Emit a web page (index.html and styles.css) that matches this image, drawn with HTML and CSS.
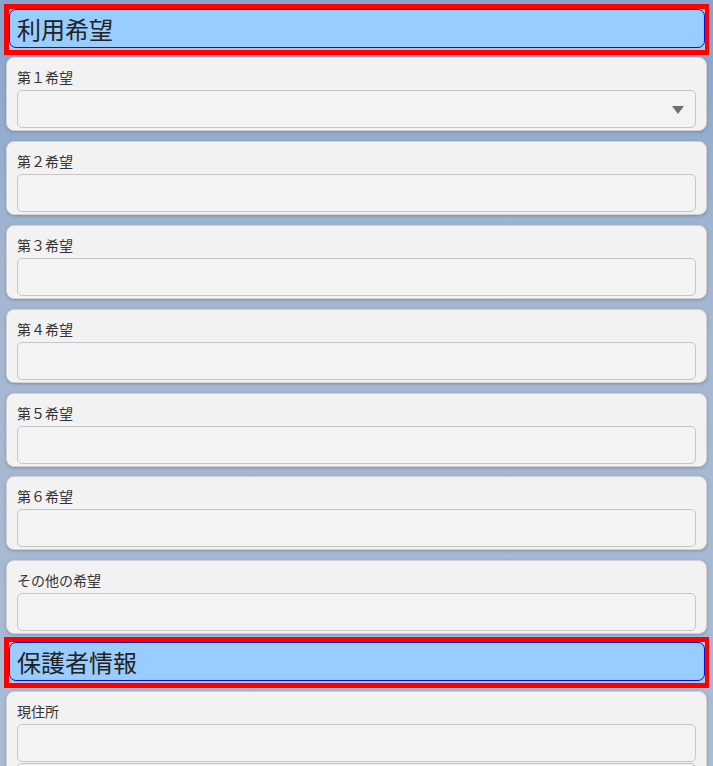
FILE: index.html
```html
<!DOCTYPE html>
<html lang="ja">
<head>
  <meta charset="UTF-8">
  <title>利用希望</title>
  <link rel="stylesheet" href="styles.css">
</head>
<body>
  <div class="page">
    <div class="section-title">
      <h2>利用希望</h2>
    </div>

    <div class="field">
      <label>第１希望</label>
      <div class="select-box"><span class="arrow"></span></div>
    </div>
    <div class="field">
      <label>第２希望</label>
      <input type="text">
    </div>
    <div class="field">
      <label>第３希望</label>
      <input type="text">
    </div>
    <div class="field">
      <label>第４希望</label>
      <input type="text">
    </div>
    <div class="field">
      <label>第５希望</label>
      <input type="text">
    </div>
    <div class="field">
      <label>第６希望</label>
      <input type="text">
    </div>
    <div class="field last">
      <label>その他の希望</label>
      <input type="text">
    </div>

    <div class="section-title">
      <h2>保護者情報</h2>
    </div>

    <div class="field">
      <label>現住所</label>
      <input type="text">
      <input type="text" class="more">
    </div>
  </div>
</body>
</html>
```

FILE: styles.css
```css
html, body {
  margin: 0;
  height: 100%;
  overflow: hidden;
}

body {
  font-family: "Noto Sans CJK JP", "Noto Sans", sans-serif;
  background: linear-gradient(#84a4cd, #a4b6d0 35%, #aabbd4 100%);
  color: #333;
}

.page {
  padding: 4px 4px 0 4px;
}

.section-title {
  border: 5px solid red;
  border-right-width: 4px;
  padding-bottom: 2px;
  background: #b8c4d4;
}

.section-title h2 {
  margin: 0;
  height: 37px;
  line-height: 37px;
  background: #99ccff;
  border: 1px solid #1010c8;
  border-radius: 7px;
  padding-left: 7px;
  font-size: 24px;
  font-weight: normal;
  color: #222;
}

.field {
  margin: 2px 2px 9.9px 2px;
  background: #f2f2f2;
  border: 1px solid #d2d2d2;
  border-radius: 8px;
  padding: 10px 10px 2px 10px;
  box-shadow: 0 1px 3px rgba(60, 70, 90, 0.35);
}

.field.last {
  margin-bottom: 3px;
}

.field.last + .section-title + .field {
  margin-top: 3px;
}

label {
  display: block;
  height: 18px;
  line-height: 18px;
  font-size: 14px;
  color: #333;
  margin-bottom: 4px;
}

input,
.select-box {
  display: block;
  box-sizing: border-box;
  width: 100%;
  height: 38px;
  margin: 0;
  background: #f3f3f3;
  border: 1px solid #c6c6c6;
  border-radius: 5px;
}

.select-box {
  position: relative;
}

.arrow {
  position: absolute;
  right: 11px;
  top: 15px;
  width: 0;
  height: 0;
  border-left: 6px solid transparent;
  border-right: 6px solid transparent;
  border-top: 8px solid #707070;
}

input.more {
  margin-top: 1px;
}
```
